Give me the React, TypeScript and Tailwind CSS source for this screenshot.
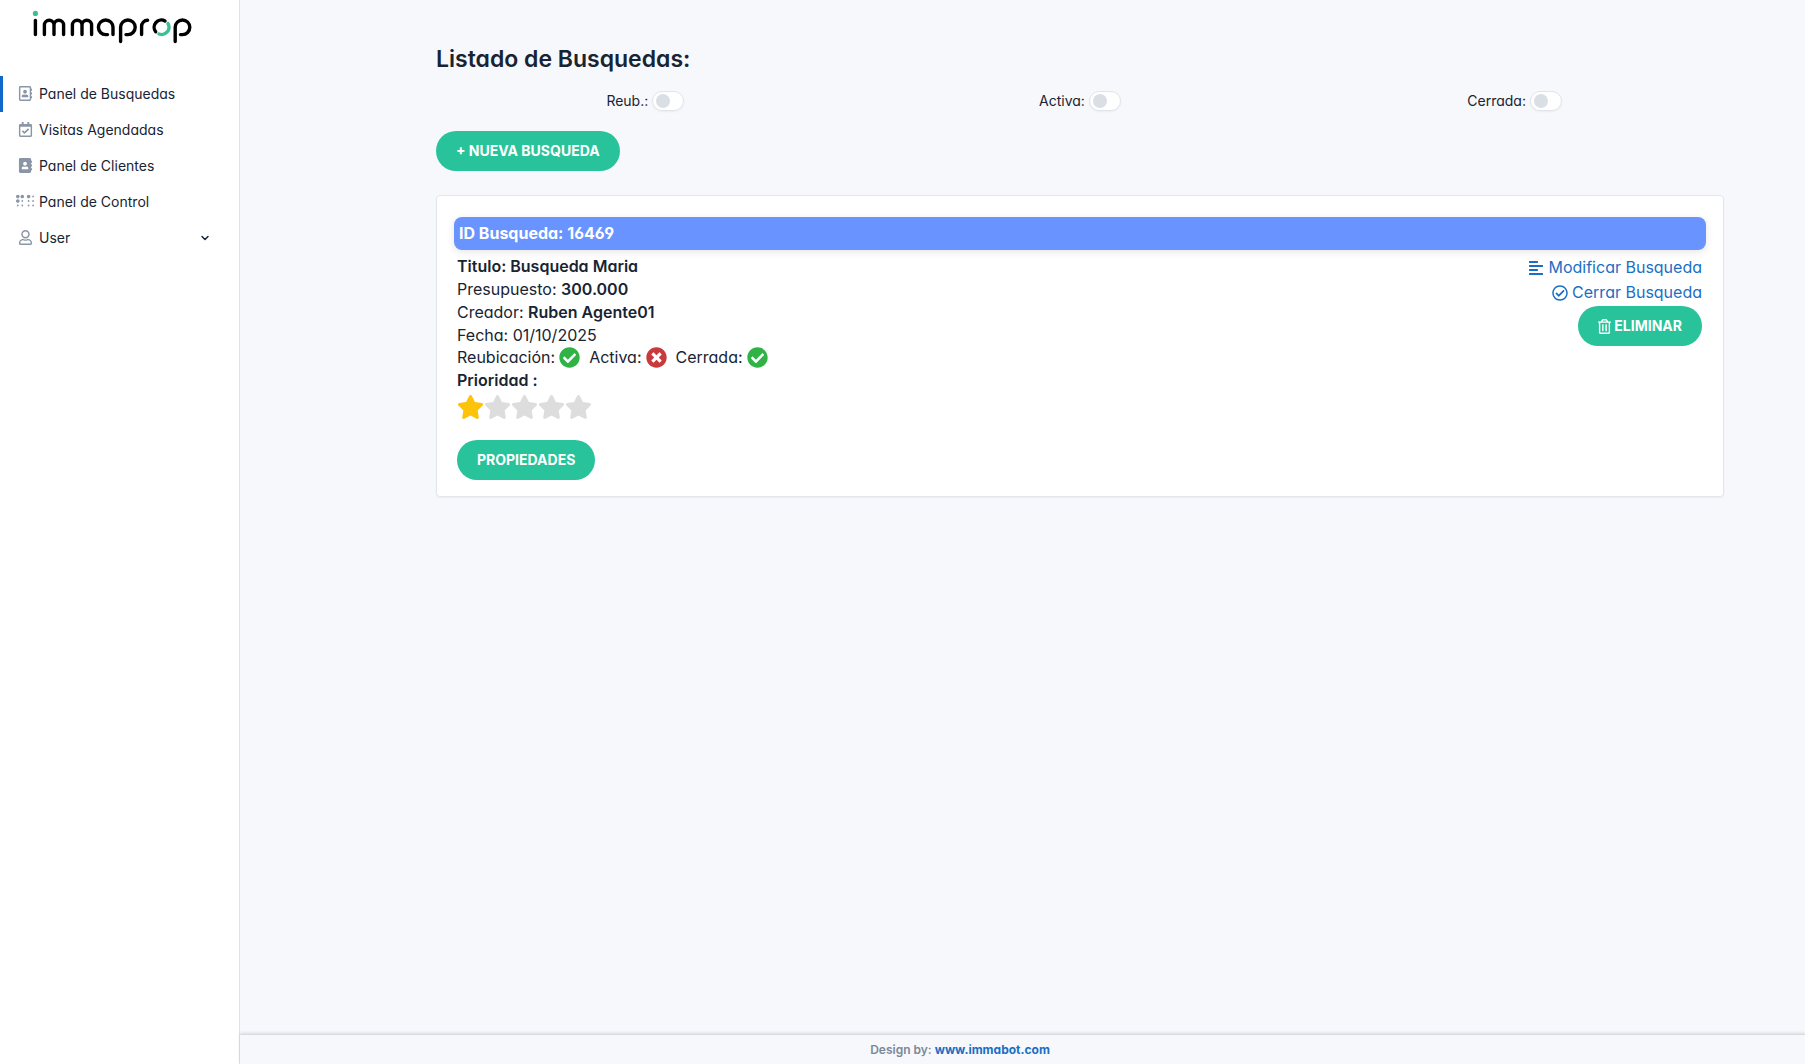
import React from "react";
import {
  FaRegAddressBook,
  FaRegCalendarCheck,
  FaAddressBook,
  FaBraille,
  FaRegUser,
  FaAlignLeft,
  FaRegCheckCircle,
  FaCheckCircle,
  FaTimesCircle,
  FaStar,
  FaRegTrashAlt,
} from "react-icons/fa";
import { ChevronDown } from "lucide-react";

function Logo() {
  return (
    <svg viewBox="0 0 160 34" className="h-[34px] w-[160px]" fill="none" strokeWidth="3.4" strokeLinecap="round" role="img" aria-label="immaprop">
      <circle cx="3.400" cy="3.400" r="2.600" fill="#3dbf94" />
      <g stroke="#000">
        <path d="M3.400 10.500V24.500" />
        <path d="M12.400 24.500V15a4.800 4.800 0 0 1 9.600 0V24.500M22 15a4.800 4.800 0 0 1 9.600 0V24.500" />
        <path d="M40.400 24.500V15a4.800 4.800 0 0 1 9.600 0V24.500M50 15a4.800 4.800 0 0 1 9.600 0V24.500" />
        <path d="M81 24.500V17.300a7.300 7.300 0 1 0-7.300 7.300H75.500" />
        <path d="M88.600 31.500V17.300a7.300 7.300 0 1 1 7.300 7.300H94" />
        <path d="M109.600 24.500V16.500a6 6 0 0 1 6-6.200" />
        <path d="M123.700 21.800a7.300 7.300 0 0 1 9.300 -10.900" />
        <path d="M143.200 31.500V17.300a7.300 7.300 0 1 1 7.300 7.300H148.500" />
      </g>
      <path stroke="#3dbf94" d="M136 13.600a7.300 7.300 0 0 1-9 10.400" />
    </svg>
  );
}

const nav = [
  { label: "Panel de Busquedas", Icon: FaRegAddressBook, active: true, size: "size-[15px]" },
  { label: "Visitas Agendadas", Icon: FaRegCalendarCheck, size: "size-[15px]" },
  { label: "Panel de Clientes", Icon: FaAddressBook, size: "size-[15px]" },
  { label: "Panel de Control", Icon: FaBraille, size: "size-[18px]" },
];

function Switch({ label, id }: { label: string; id: string }) {
  return (
    <div className="flex items-center justify-center gap-1">
      <label htmlFor={id}>{label}</label>
      <input
        id={id}
        type="checkbox"
        role="switch"
        className="relative h-5 w-8 appearance-none rounded-full border border-[#e1e5eb] bg-white shadow-xs before:absolute before:top-[2px] before:left-[3px] before:size-[14px] before:rounded-full before:bg-[#dadfe5] checked:bg-[#1a6fc4] checked:before:left-[13px]"
      />
    </div>
  );
}

function Pill({ children }: { children: React.ReactNode }) {
  return (
    <button type="button" className="inline-flex h-10 items-center gap-[3px] rounded-full bg-[#28c39a] px-5 text-sm font-bold text-white uppercase">
      {children}
    </button>
  );
}

function Status({ label, ok }: { label: string; ok: boolean }) {
  return (
    <span className="flex items-center gap-1">
      {label}
      {ok ? <FaCheckCircle className="size-[21px] text-[#2fb344]" /> : <FaTimesCircle className="size-[21px] text-[#c83a3c]" />}
    </span>
  );
}

export default function App() {
  return (
    <div className="flex min-h-screen bg-[#f6f8fb] font-[Inter,sans-serif] text-sm text-[#182433] [font-feature-settings:'cv03','cv04','cv11']">
      <aside className="w-60 shrink-0 border-r border-[#dfe3e9] bg-white">
        <div className="flex px-8 pt-[10px] pb-8">
          <Logo />
        </div>
        <nav>
          <ul>
            {nav.map(({ label, Icon, active, size }) => (
              <li key={label} className={active ? "border-l-3 border-[#1068c8]" : "border-l-3 border-transparent"}>
                <a href="#" className="flex h-9 items-center gap-1 pl-3">
                  <span className="flex w-5 justify-center pb-[2px] text-[#8a95a5]">
                    <Icon className={size} />
                  </span>
                  {label}
                </a>
              </li>
            ))}
            <li className="border-l-3 border-transparent">
              <button type="button" className="flex h-9 w-full items-center gap-1 pr-7 pl-3">
                <span className="flex w-5 justify-center pb-[2px] text-[#8a95a5]">
                  <FaRegUser className="size-[15px]" />
                </span>
                User
                <ChevronDown className="ml-auto size-3" strokeWidth={3} />
              </button>
            </li>
          </ul>
        </nav>
      </aside>
      <div className="flex min-w-0 flex-1 flex-col">
        <main className="flex-1 pt-[45px] pr-[81px] pl-[196px]">
          <h1 className="text-[23px] leading-7 font-semibold">Listado de Busquedas:</h1>
          <div className="-mx-2 mt-[18px] grid grid-cols-3">
            <Switch id="reub" label="Reub.:" />
            <Switch id="activa" label="Activa:" />
            <Switch id="cerrada" label="Cerrada:" />
          </div>
          <div className="mt-5 flex">
            <Pill>+ Nueva Busqueda</Pill>
          </div>
          <article className="mt-6 rounded border border-[#e3e7ed] bg-white px-[17px] pt-[21px] pb-4 text-base leading-[23px] shadow-xs">
            <h2 className="rounded-lg bg-[#6993ff] px-[5px] py-[5px] font-bold text-white shadow-[0_2px_8px_rgba(0,0,0,0.1)]">ID Busqueda: 16469</h2>
            <div className="flex justify-between pt-[5px] pr-1 pl-[3px]">
              <div>
                <p className="font-semibold">Titulo: Busqueda Maria</p>
                <p>Presupuesto: <strong className="font-semibold">300.000</strong></p>
                <p>Creador: <strong className="font-semibold">Ruben Agente01</strong></p>
                <p className="leading-[22px]">Fecha: 01/10/2025</p>
                <div className="flex gap-[9px]">
                  <Status label="Reubicación:" ok />
                  <Status label="Activa:" ok={false} />
                  <Status label="Cerrada:" ok />
                </div>
                <p className="font-semibold">Prioridad :</p>
                <div className="mt-[3px] mb-[21px] flex" role="img" aria-label="1 de 5">
                  {[1, 2, 3, 4, 5].map((n) => (
                    <FaStar key={n} className={n === 1 ? "h-6 w-[27px] text-[#fdc20a]" : "h-6 w-[27px] text-[#dddddd]"} />
                  ))}
                </div>
                <Pill>Propiedades</Pill>
              </div>
              <div className="flex flex-col items-end text-[#1a6fc4]">
                <a href="#" className="flex h-[25px] items-center gap-1"><FaAlignLeft className="size-4" />Modificar Busqueda</a>
                <a href="#" className="mb-px flex h-[25px] items-center gap-1"><FaRegCheckCircle className="size-4" />Cerrar Busqueda</a>
                <Pill><FaRegTrashAlt className="h-[15px] w-[13px]" />Eliminar</Pill>
              </div>
            </div>
          </article>
        </main>
        <footer className="flex h-[30px] items-center justify-center gap-[3px] border-t border-[#d8dce2] pr-[125px] text-xs font-semibold text-[#7c8799] shadow-[0_-1px_3px_rgba(0,0,0,0.12)]">
          Design by: <a href="#" className="font-bold text-[#1a6fc4]">www.immabot.com</a>
        </footer>
      </div>
    </div>
  );
}
